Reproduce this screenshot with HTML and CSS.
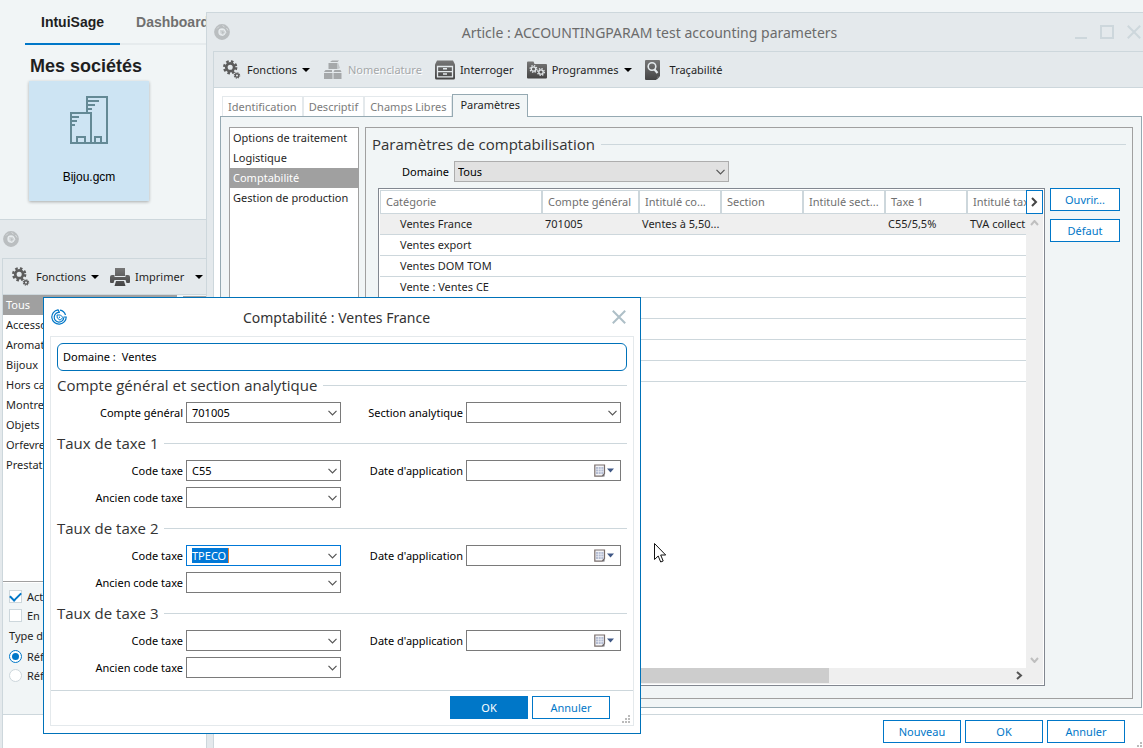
FILE: index.html
```html
<!DOCTYPE html>
<html lang="fr">
<head>
    <meta charset="UTF-8">
    <meta name="viewport" content="width=device-width, initial-scale=1.0">
    <title>Gestion commerciale</title>
    <link rel="stylesheet" href="styles.css">
</head>
<body>
    <!-- Icônes -->
    <svg class="sprite" aria-hidden="true">
        <defs>
            <linearGradient id="metal" x1="0" y1="0" x2="0" y2="1">
                <stop offset="0" stop-color="#777"/>
                <stop offset="1" stop-color="#444"/>
            </linearGradient>
        </defs>
        <symbol id="i-logo" viewBox="0 0 16 16">
            <g fill="none" stroke="currentColor">
                <path d="M7 .8A7.200 7.200 0 1 0 15.200 7.500M9 1.200A7 7 0 0 1 14.500 6M7 .5l1.500 3.200M12.500 8h3.200" stroke-width="1.200"/>
                <path d="M8.500 3.500A4.800 4.800 0 1 0 12.800 8.500" stroke-width="1.200"/>
                <path d="M6 6h3.500L12 8.500 9 11.200 6.300 9z"/>
            </g>
            <circle cx="8.500" cy="8.300" r=".7" fill="currentColor"/>
        </symbol>
        <symbol id="i-logo-off" viewBox="0 0 16 16">
            <circle cx="8" cy="8" r="5.800" fill="none" stroke="#babec0" stroke-width="4.200"/>
            <path d="M3 4.500l2-2M8.500 1.500l2 1.500M12.500 4l1.500 2.500" fill="none" stroke="#d8dcde"/>
            <path d="M5.500 5.500h4L12 8.200 9 11.500 5.800 9.500z" fill="#d0d4d6" stroke="#e8ecee"/>
            <path d="M7.500 7l2.500 1-1.500 2z" fill="#babec0"/>
        </symbol>
        <symbol id="i-gears" viewBox="0 0 20 22">
            <g fill="none" stroke="#5c5c5c">
                <circle cx="8" cy="8" r="4.300" stroke-width="3"/>
                <circle cx="8" cy="8" r="6.600" stroke-width="2.600" stroke-dasharray="2.800 2.384"/>
                <circle cx="15.500" cy="17" r="1.900" stroke-width="1.600"/>
                <circle cx="15.500" cy="17" r="3" stroke-width="1.200" stroke-dasharray="1.300 1.056"/>
            </g>
        </symbol>
        <symbol id="i-boxes" viewBox="0 0 20 20">
            <path fill="#a5a8aa" d="M7 2l2-1.500h7L14.500 2zM5.500 3h9v6h-9zM15.500 2.500l1 5.500-1 1zM1 12l1.500-2H9v2zM1 13h8.500v6H1zM10.500 12l1-2h6l1 2zM10.500 13h8v6h-8z"/>
        </symbol>
        <symbol id="i-drawer" viewBox="0 0 20 20">
            <path fill="url(#metal)" d="M2 .5h16l2 4V18q0 1.500-1.500 1.500h-17Q0 19.500 0 18V4.500z"/>
            <path fill="none" stroke="#e4e9ec" stroke-width="1.300" d="M2.500 6.500h15v5.200h-15zM2.500 11.700h15v5.200h-15z"/>
            <path fill="none" stroke="#e4e9ec" stroke-width="1.500" d="M8 8.800h4M8 14h4"/>
        </symbol>
        <symbol id="i-folder" viewBox="0 0 20 20">
            <path fill="url(#metal)" d="M0 2.500q0-1 1-1h5.500l1 2.500H19q1 0 1 1v12.500q0 1-1 1H1q-1 0-1-1z"/>
            <g fill="none" stroke="#e4e9ec">
                <circle cx="6.500" cy="9" r="2.200" stroke-width="1.300"/>
                <circle cx="6.500" cy="9" r="3.400" stroke-width="1.200" stroke-dasharray="1.400 1.270"/>
                <circle cx="14" cy="12" r="2.200" stroke-width="1.300"/>
                <circle cx="14" cy="12" r="3.400" stroke-width="1.200" stroke-dasharray="1.400 1.270"/>
            </g>
        </symbol>
        <symbol id="i-trace" viewBox="0 0 20 20">
            <path fill="url(#metal)" d="M1 0h13q1 0 1 1v15l-4 4H1q-1 0-1-1V1q0-1 1-1z"/>
            <path fill="#666" d="M12 19.500v-3h3z"/>
            <circle cx="7" cy="6.500" r="3.800" fill="none" stroke="#e4e9ec" stroke-width="1.600"/>
            <path stroke="#e4e9ec" stroke-width="2.200" d="M9.500 9.500l3 3.500"/>
        </symbol>
        <symbol id="i-printer" viewBox="0 0 20 20">
            <path fill="url(#metal)" d="M5 1h10v8H5zM2 8h2.500v2h11V8H18q2 0 2 2v5q0 1-1 1h-2.500l-1-3h-11l-1 3H1q-1 0-1-1v-5q0-2 2-2zM6 14h8l1.500 5h-11z"/>
        </symbol>
        <symbol id="i-chevron" viewBox="0 0 9 6">
            <path fill="none" stroke="#555" stroke-width="1.200" d="M.5 .8l4 4 4-4"/>
        </symbol>
        <symbol id="i-close" viewBox="0 0 14 14">
            <path fill="none" stroke="currentColor" stroke-width="2" d="M.8.8l12.400 12.400M13.200.8L.8 13.200"/>
        </symbol>
        <symbol id="i-calendar" viewBox="0 0 20 14">
            <path fill="#f3f4f8" stroke="#7a6f6c" stroke-width="1.200" d="M.8 1h9.700v8.500L8 12.200H.8z"/>
            <path fill="#6b6a72" d="M10.500 9.500v3H8z"/>
            <path fill="#b4bdd2" d="M2 3h7.500v7H2z"/>
            <path fill="none" stroke="#f3f4f8" stroke-width=".6" d="M2 5.300h7.500M2 7.600h7.500M4.500 3v7M7 3v7"/>
            <path fill="#3f5785" d="M13 4.500h7l-3.500 4z"/>
        </symbol>
        <symbol id="i-grip" viewBox="0 0 9 9">
            <path fill="#bbb" d="M6 0h2v2H6zM3 3h2v2H3zM6 3h2v2H6zM0 6h2v2H0zM3 6h2v2H3zM6 6h2v2H6z"/>
        </symbol>
    </svg>

    <main class="desktop">
        <!-- Portail -->
        <section class="portal">
            <nav class="portal-tabs">
                <a href="#intuisage" class="active">IntuiSage</a>
                <a href="#dashboard">Dashboard</a>
            </nav>
            <h1>Mes sociétés</h1>
            <a href="#bijou" class="company">
                <svg width="40" height="50" viewBox="-1 0 40 50" fill="none" stroke="#638995" stroke-width="2">
                    <path d="M17 18V2h20v46H1V18h20v30M18 6h11M18 10h7M18 14h4M2 22h7M2 26h5M2 30h3M7 48v-6h8v6M25 48v-6h6v6"/>
                </svg>
                <span>Bijou.gcm</span>
            </a>
        </section>

        <!-- Liste des articles -->
        <section class="window win-list">
            <header class="titlebar off"><svg class="logo"><use href="#i-logo-off"/></svg></header>
            <div class="frame">
                <div class="toolbar">
                    <button type="button"><svg class="ico"><use href="#i-gears"/></svg>Fonctions<i class="arrow"></i></button>
                    <button type="button"><svg class="ico"><use href="#i-printer"/></svg>Imprimer<i class="arrow far"></i></button>
                </div>
                <div class="families">
                    <ul class="list">
                        <li class="selected">Tous</li>
                        <li>Accesso</li>
                        <li>Aromat</li>
                        <li>Bijoux</li>
                        <li>Hors cat</li>
                        <li>Montres</li>
                        <li>Objets</li>
                        <li>Orfevre</li>
                        <li>Prestati</li>
                    </ul>
                    <div class="articles"></div>
                </div>
                <div class="filters">
                    <label><input type="checkbox" checked>Acti</label>
                    <label><input type="checkbox">En</label>
                    <p>Type d</p>
                    <label><input type="radio" name="type" checked>Réf</label>
                    <label><input type="radio" name="type">Réf</label>
                </div>
                <div class="list-footer"></div>
            </div>
        </section>

        <!-- Fiche article -->
        <section class="window win-article">
            <header class="titlebar off">
                <svg class="logo"><use href="#i-logo-off"/></svg>
                <h2>Article : ACCOUNTINGPARAM test accounting parameters</h2>
                <button type="button" aria-label="Réduire"><svg width="14" height="14"><path d="M0 13h12" stroke="currentColor" stroke-width="2"/></svg></button>
                <button type="button" aria-label="Agrandir"><svg width="16" height="14"><path d="M1 1h12v12H1z" fill="none" stroke="currentColor" stroke-width="2"/></svg></button>
                <button type="button" aria-label="Fermer"><svg width="14" height="14"><use href="#i-close"/></svg></button>
            </header>
            <div class="frame">
                <div class="toolbar">
                    <button type="button"><svg class="ico"><use href="#i-gears"/></svg>Fonctions<i class="arrow"></i></button>
                    <button type="button" disabled><svg class="ico"><use href="#i-boxes"/></svg>Nomenclature</button>
                    <button type="button"><svg class="ico"><use href="#i-drawer"/></svg>Interroger</button>
                    <button type="button"><svg class="ico"><use href="#i-folder"/></svg>Programmes<i class="arrow"></i></button>
                    <button type="button"><svg class="ico"><use href="#i-trace"/></svg>Traçabilité</button>
                </div>

                <div class="content">
                    <nav class="tabs">
                        <a href="#identification">Identification</a>
                        <a href="#descriptif">Descriptif</a>
                        <a href="#champs">Champs Libres</a>
                        <a href="#parametres" class="active">Paramètres</a>
                    </nav>
                    <div class="panel">
                        <ul class="list params">
                            <li>Options de traitement</li>
                            <li>Logistique</li>
                            <li class="selected">Comptabilité</li>
                            <li>Gestion de production</li>
                        </ul>
                        <div class="group">
                            <h3 class="legend">Paramètres de comptabilisation</h3>
                            <div class="domain">
                                <label for="domaine">Domaine</label>
                                <span class="combo gray">
                                    <select id="domaine"><option>Tous</option></select>
                                    <svg class="chevron"><use href="#i-chevron"/></svg>
                                </span>
                            </div>
                            <div class="columns">
                                <div class="grid">
                                    <div class="table-clip">
                                        <table>
                                            <colgroup>
                                                <col class="c-cat"><col class="c-acc"><col><col><col><col><col>
                                            </colgroup>
                                            <thead>
                                                <tr>
                                                    <th>Catégorie</th>
                                                    <th>Compte général</th>
                                                    <th>Intitulé co...</th>
                                                    <th>Section</th>
                                                    <th>Intitulé sect...</th>
                                                    <th>Taxe 1</th>
                                                    <th>Intitulé tax</th>
                                                </tr>
                                            </thead>
                                            <tbody>
                                                <tr class="current">
                                                    <td>Ventes France</td>
                                                    <td>701005</td>
                                                    <td>Ventes à 5,50...</td>
                                                    <td></td>
                                                    <td></td>
                                                    <td>C55/5,5%</td>
                                                    <td>TVA collect</td>
                                                </tr>
                                                <tr><td>Ventes export</td><td colspan="6"></td></tr>
                                                <tr><td>Ventes DOM TOM</td><td colspan="6"></td></tr>
                                                <tr><td>Vente : Ventes CE</td><td colspan="6"></td></tr>
                                                <tr><td colspan="7"></td></tr>
                                                <tr><td colspan="7"></td></tr>
                                                <tr><td colspan="7"></td></tr>
                                                <tr><td colspan="7"></td></tr>
                                            </tbody>
                                        </table>
                                    </div>
                                    <button type="button" class="more" aria-label="Colonnes suivantes"><svg width="7" height="10"><path d="M1 1l4 4-4 4" fill="none" stroke="#444" stroke-width="2"/></svg></button>
                                    <div class="vscroll">
                                        <svg width="9" height="6"><path d="M1 5l3.500-4L8 5" fill="none" stroke="#bfbfbf" stroke-width="2"/></svg>
                                        <svg width="9" height="6"><path d="M1 1l3.500 4L8 1" fill="none" stroke="#bfbfbf" stroke-width="2"/></svg>
                                    </div>
                                    <div class="hscroll">
                                        <div class="thumb"></div>
                                        <svg width="7" height="9"><path d="M1 1l4 3.500L1 8" fill="none" stroke="#555" stroke-width="2"/></svg>
                                    </div>
                                </div>
                                <div class="side">
                                    <button type="button" class="btn">Ouvrir...</button>
                                    <button type="button" class="btn">Défaut</button>
                                </div>
                            </div>
                        </div>
                    </div>
                    <footer class="actions">
                        <button type="button" class="btn">Nouveau</button>
                        <button type="button" class="btn">OK</button>
                        <button type="button" class="btn">Annuler</button>
                        <svg class="grip"><use href="#i-grip"/></svg>
                    </footer>
                </div>
            </div>
        </section>

        <!-- Boîte de dialogue Comptabilité -->
        <form class="dialog">
            <header class="titlebar">
                <svg class="logo"><use href="#i-logo"/></svg>
                <h2>Comptabilité : Ventes France</h2>
                <button type="button" aria-label="Fermer"><svg width="14" height="14"><use href="#i-close"/></svg></button>
            </header>
            <div class="dialog-body">
                <div class="fields">
                    <p class="scope"><span>Domaine :</span><span>Ventes</span></p>

                    <h3 class="legend">Compte général et section analytique</h3>
                    <div class="row">
                        <label for="compte">Compte général</label>
                        <span class="combo"><select id="compte"><option>701005</option></select><svg class="chevron"><use href="#i-chevron"/></svg></span>
                        <label for="section">Section analytique</label>
                        <span class="combo"><select id="section"><option></option></select><svg class="chevron"><use href="#i-chevron"/></svg></span>
                    </div>

                    <h3 class="legend">Taux de taxe 1</h3>
                    <div class="row">
                        <label for="code1">Code taxe</label>
                        <span class="combo"><select id="code1"><option>C55</option></select><svg class="chevron"><use href="#i-chevron"/></svg></span>
                        <label for="date1">Date d'application</label>
                        <span class="combo"><input type="text" id="date1"><svg class="calendar"><use href="#i-calendar"/></svg></span>
                        <label for="ancien1">Ancien code taxe</label>
                        <span class="combo"><select id="ancien1"><option></option></select><svg class="chevron"><use href="#i-chevron"/></svg></span>
                    </div>

                    <h3 class="legend">Taux de taxe 2</h3>
                    <div class="row">
                        <label for="code2">Code taxe</label>
                        <span class="combo editing"><select id="code2"><option>TPECO</option></select><svg class="chevron"><use href="#i-chevron"/></svg></span>
                        <label for="date2">Date d'application</label>
                        <span class="combo"><input type="text" id="date2"><svg class="calendar"><use href="#i-calendar"/></svg></span>
                        <label for="ancien2">Ancien code taxe</label>
                        <span class="combo"><select id="ancien2"><option></option></select><svg class="chevron"><use href="#i-chevron"/></svg></span>
                    </div>

                    <h3 class="legend">Taux de taxe 3</h3>
                    <div class="row">
                        <label for="code3">Code taxe</label>
                        <span class="combo"><select id="code3"><option></option></select><svg class="chevron"><use href="#i-chevron"/></svg></span>
                        <label for="date3">Date d'application</label>
                        <span class="combo"><input type="text" id="date3"><svg class="calendar"><use href="#i-calendar"/></svg></span>
                        <label for="ancien3">Ancien code taxe</label>
                        <span class="combo"><select id="ancien3"><option></option></select><svg class="chevron"><use href="#i-chevron"/></svg></span>
                    </div>
                </div>
                <footer class="actions">
                    <button type="button" class="btn primary">OK</button>
                    <button type="button" class="btn">Annuler</button>
                    <svg class="grip"><use href="#i-grip"/></svg>
                </footer>
            </div>
        </form>

        <svg class="pointer" viewBox="0 0 13 20"><path d="M.5.5v16l3.700-3.500 2.500 6 2.500-1-2.500-6h5z" fill="#fff" stroke="#111"/></svg>
    </main>
</body>
</html>
```
FILE: styles.css
```css
* {
    box-sizing: border-box;
}

body {
    margin: 0;
    background: #f1f5f6;
    color: #1f1f1f;
    font-family: "Noto Sans", "Open Sans", sans-serif;
    font-size: 11px;
    line-height: 20px;
}

h1, h2, h3, p, ul {
    margin: 0;
    padding: 0;
    font-weight: normal;
}

a {
    color: inherit;
    text-decoration: none;
}

button, input, select {
    margin: 0;
    padding: 0;
    border: 0;
    border-radius: 0;
    background: none;
    color: inherit;
    font: inherit;
    appearance: none;
}

svg {
    display: block;
    flex: none;
}

.sprite {
    position: absolute;
    width: 0;
    height: 0;
}

.desktop {
    position: relative;
    height: 100vh;
    min-height: 740px;
    overflow: hidden;
}

/* Portail */
.portal {
    padding-left: 25px;
    font-family: "Liberation Sans", Arial, sans-serif;
    font-size: 12px;
}

.portal-tabs {
    display: flex;
    border-bottom: 2px solid #e6ebed;
    font-size: 14px;
    font-weight: bold;
    color: #707070;
}

.portal-tabs a {
    padding: 12px 16px 11px;
    margin-bottom: -2px;
    border-bottom: 2px solid transparent;
}

.portal-tabs .active {
    color: #1f1f1f;
    border-color: #0077c8;
}

.portal h1 {
    margin: 11px 0 5px 5px;
    font-size: 18px;
    font-weight: bold;
}

.company {
    display: flex;
    flex-direction: column;
    align-items: center;
    justify-content: space-between;
    width: 120px;
    height: 120px;
    margin-left: 4px;
    padding: 14px 0;
    background: #cde4f3;
    box-shadow: 0 1px 3px rgba(0, 0, 0, 0.3);
    color: #000;
}

/* Fenêtres */
.window {
    position: absolute;
    display: flex;
    flex-direction: column;
    bottom: -8px;
    padding-bottom: 6px;
    border: 1px solid #cdd7dc;
    background: #e4e9ec;
}

.win-list {
    left: -5px;
    top: 219px;
    width: 300px;
}

.win-article {
    left: 206px;
    right: -13px;
    top: 12px;
}

.titlebar {
    display: flex;
    align-items: center;
    height: 38px;
    padding: 0 8px 0 7px;
    color: #aebfc7;
}

.titlebar.off {
    color: #cdd7dc;
}

.titlebar h2 {
    flex: 1;
    padding-top: 2px;
    text-align: center;
    font-size: 14px;
    color: #333;
}

.titlebar.off h2 {
    color: #6b6b6b;
}

.titlebar button {
    display: flex;
    justify-content: center;
    width: 26px;
}

.logo {
    width: 16px;
    height: 16px;
    color: #0077c8;
}

.frame {
    flex: 1;
    display: flex;
    flex-direction: column;
    margin: 0 6px;
    border: 1px solid #cdd7dc;
    border-bottom: 0;
}

.toolbar {
    display: flex;
    align-items: center;
    gap: 13px;
    height: 36px;
    padding-left: 8px;
    border-bottom: 1px solid #cdd7dc;
}

.win-list .toolbar {
    gap: 11px;
}

.toolbar button {
    display: flex;
    align-items: center;
    gap: 5px;
    white-space: nowrap;
}

.toolbar button:disabled {
    color: #a5a8aa;
    text-shadow: 1px 1px #fff;
}

.ico {
    width: 20px;
    height: 20px;
}

.arrow {
    width: 8px;
    border: 4px solid transparent;
    border-top-color: #000;
    border-bottom: 0;
}

.arrow.far {
    margin-left: 6px;
}

.list {
    list-style: none;
    background: #fff;
}

.list li {
    padding: 0 3px;
    white-space: nowrap;
}

.list .selected {
    background: #a0a0a0;
    color: #fff;
}

/* Liste des articles */
.families {
    flex: 1;
    display: flex;
    gap: 6px;
    border-bottom: 1px solid #a0a0a0;
    background: #f1f5f6;
}

.families .list {
    width: 174px;
}

.articles {
    flex: 1;
    margin-top: 1px;
    border: 1px solid #a0a0a0;
    background: #fff;
}

.filters {
    height: 133px;
    padding: 4px 6px;
    border-bottom: 1px solid #cdd7dc;
    border-top: 1px solid #fff;
    background: #f1f5f6;
}

.filters label {
    display: flex;
    align-items: center;
    gap: 5px;
    height: 19px;
}

.filters p {
    margin: 1px 0;
}

.filters input {
    display: grid;
    place-items: center;
    width: 13px;
    height: 13px;
    border: 1px solid #cdd7dc;
    background: #fff;
}

.filters input[type="radio"] {
    border-radius: 50%;
}

.filters input[type="radio"]:checked {
    border-color: #0077c8;
}

.filters input[type="radio"]:checked::before {
    content: "";
    width: 7px;
    height: 7px;
    border-radius: 50%;
    background: #0077c8;
}

.filters input[type="checkbox"]:checked::before {
    content: "";
    width: 9px;
    height: 5px;
    margin-top: -3px;
    border-left: 2px solid #0077c8;
    border-bottom: 2px solid #0077c8;
    transform: rotate(-45deg);
}

.list-footer {
    height: 34px;
    background: #fff;
}

/* Fiche article */
.content {
    flex: 1;
    display: flex;
    flex-direction: column;
    padding-top: 6px;
    background: #fff;
}

.tabs {
    display: flex;
    align-items: flex-end;
    height: 22px;
    padding-left: 8px;
    color: #7b7b7b;
}

.tabs a {
    height: 20px;
    padding: 0 5px;
    border: 1px solid #e4e9ec;
    border-bottom: 0;
    white-space: nowrap;
}

.tabs .active {
    height: 23px;
    margin-bottom: -1px;
    padding: 0 7px;
    border-color: #95a9b2;
    background: #f1f5f6;
    color: #1f1f1f;
    z-index: 1;
}

.panel {
    flex: 1;
    display: flex;
    gap: 6px;
    margin: 0 6px;
    padding: 10px 8px 8px;
    border: 1px solid #95a9b2;
    background: #f1f5f6;
}

.params {
    width: 130px;
    border: 1px solid #a0a0a0;
}

.group {
    flex: 1;
    display: flex;
    flex-direction: column;
    min-width: 0;
    padding: 6px 12px 12px;
    border: 1px solid #a0a0a0;
}

.legend {
    display: flex;
    align-items: center;
    gap: 6px;
    font-family: "Open Sans", "Noto Sans", sans-serif;
    font-size: 15px;
    white-space: nowrap;
    color: #333;
}

.legend::after {
    content: "";
    flex: 1;
    height: 1px;
    background: #cdd7dc;
}

.group .legend {
    margin: 0 -6px;
}

.domain {
    display: flex;
    align-items: center;
    gap: 5px;
    margin: 7px 0 6px;
    color: #000;
}

.domain label {
    width: 71px;
    text-align: right;
}

.domain .combo {
    width: 275px;
}

.combo {
    display: grid;
    grid-template: 21px / 1fr;
    align-items: center;
}

.combo > * {
    grid-area: 1 / 1;
}

.combo select, .combo input {
    width: 100%;
    height: 21px;
    padding: 0 5px;
    border: 1px solid #7a7a7a;
    background: #fff;
    color: #000;
    line-height: 19px;
}

.combo.gray select {
    padding: 0 3px;
    border-color: #adadad;
    background: #e1e1e1;
}

/* texte sélectionné et curseur de saisie */
.combo.editing select {
    border-color: #0078d7;
    background: linear-gradient(#f08030, #f08030) 41px 2px / 1px 15px no-repeat, linear-gradient(#0078d7, #0078d7) 5px 2px / 36px 15px no-repeat;
    color: #fff;
}

.chevron {
    justify-self: end;
    width: 9px;
    height: 6px;
    margin-right: 4px;
    pointer-events: none;
}

.calendar {
    justify-self: end;
    width: 20px;
    height: 14px;
    margin-right: 7px;
    pointer-events: none;
}

.columns {
    flex: 1;
    display: flex;
    gap: 5px;
}

.grid {
    flex: 1;
    display: grid;
    grid-template: 24px 1fr 16px / 1fr 17px;
    min-width: 0;
    padding: 1px;
    border: 1px solid #828790;
    background: #fff;
}

.table-clip {
    grid-area: 1 / 1 / 3 / 2;
    overflow: hidden;
}

.grid table {
    width: 669px;
    table-layout: fixed;
    border-collapse: separate;
    border-spacing: 0;
}

col {
    width: 82px;
}

.c-cat {
    width: 162px;
}

.c-acc {
    width: 97px;
}

th, td {
    padding: 0 3px;
    text-align: left;
    white-space: nowrap;
    font-weight: normal;
}

th {
    height: 24px;
    padding: 0 5px;
    border: 1px solid #cdd7dc;
    color: #707070;
}

td {
    height: 21px;
    border-bottom: 1px solid #cdd7dc;
}

td:first-child {
    padding-left: 20px;
}

.current {
    background: #efefef;
}

.more {
    display: grid;
    place-items: center;
    border: 1px solid #0077c8;
    background: #fff;
}

.vscroll {
    display: flex;
    flex-direction: column;
    align-items: center;
    justify-content: space-between;
    padding: 6px 0 5px;
    background: #efefef;
}

.hscroll {
    grid-column: 1 / 3;
    display: flex;
    align-items: center;
    justify-content: space-between;
    padding: 0 20px 1px 17px;
    background: #efefef;
}

.thumb {
    width: 69%;
    height: 15px;
    background: #cdcdcd;
}

.side {
    display: flex;
    flex-direction: column;
    gap: 8px;
    width: 70px;
}

.btn {
    height: 23px;
    border: 1px solid #0077c8;
    background: #fff;
    color: #0077c8;
}

.btn.primary {
    background: #0077c8;
    color: #fff;
}

.actions {
    position: relative;
    display: flex;
    justify-content: flex-end;
    gap: 4px;
    padding: 5px 23px 6px;
    border-top: 1px solid #cdd7dc;
}

.actions .btn {
    width: 78px;
}

.content .actions {
    margin-top: 6px;
}

.grip {
    position: absolute;
    right: 2px;
    bottom: 1px;
    width: 9px;
    height: 9px;
}

/* Boîte de dialogue */
.dialog {
    position: absolute;
    left: 43px;
    top: 297px;
    width: 598px;
    border: 1px solid #0072b9;
    background: #fff;
}

.dialog-body {
    margin: 0 6px 7px;
    border: 1px solid #e4e9ec;
}

.fields {
    padding: 6px 6px 12px;
}

.scope {
    display: flex;
    gap: 6px;
    margin-bottom: 4px;
    padding: 3px 5px;
    border: 1px solid #0072b9;
    border-radius: 6px;
    color: #000;
}

.row {
    display: grid;
    grid-template-columns: 126px 155px 119px 155px;
    gap: 6px 3px;
    margin: 7px 0 10px;
    color: #000;
}

.row:last-child {
    margin-bottom: 0;
}

.row label {
    line-height: 21px;
    text-align: right;
    white-space: nowrap;
}

.dialog .actions {
    padding-bottom: 6px;
}

/* Pointeur de la souris */
.pointer {
    position: absolute;
    left: 654px;
    top: 543px;
    width: 13px;
    height: 20px;
}
```
